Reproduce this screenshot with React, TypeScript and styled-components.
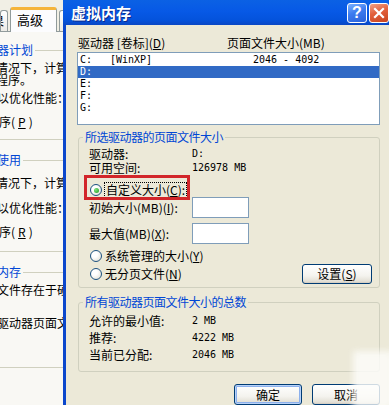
import React from "react";
import styled, { createGlobalStyle } from "styled-components";

const CJK = `"Noto Sans CJK SC", "Noto Sans", sans-serif`;
const MONO = `"DejaVu Sans Mono", "Noto Sans CJK SC", monospace`;

const Global = createGlobalStyle`
  html, body { margin: 0; padding: 0; background: #ECE9D8; }
  body { font-family: ${CJK}; font-size: 12px; color: #000; }
  * { box-sizing: border-box; }
`;

const Screen = styled.div`
  position: relative;
  width: 389px;
  height: 405px;
  overflow: hidden;
  display: flex;
  align-items: stretch;
  background: #ECE9D8;
  font-family: ${CJK};
  font-size: 12px;
  line-height: 14px;
  color: #000;
`;

/* ---------- background window (性能选项 / 高级) ---------- */
const BackWindow = styled.div`
  width: 63px;
  flex-shrink: 0;
  overflow: hidden;
  display: flex;
  flex-direction: column;
  background: #F1EFE5;
`;

const TabStrip = styled.div`
  height: 32px;
  flex-shrink: 0;
  width: 300px;
  display: flex;
  align-items: flex-end;
  border-bottom: 1px solid #919B9C;
`;

const Tab = styled.div<{ $active?: boolean; $w: number; $ml?: number }>`
  width: ${(p) => p.$w}px;
  margin-left: ${(p) => p.$ml ?? 0}px;
  height: ${(p) => (p.$active ? 25 : 21)}px;
  margin-bottom: ${(p) => (p.$active ? -1 : 0)}px;
  flex-shrink: 0;
  overflow: hidden;
  white-space: nowrap;
  line-height: ${(p) => (p.$active ? 20 : 19)}px;
  font-size: ${(p) => (p.$active ? 13 : 12)}px;
  padding-left: ${(p) => (p.$active ? 6 : 0)}px;
  background: ${(p) =>
    p.$active ? "#FCFCFE" : "linear-gradient(#FFFFFF, #ECEBE6)"};
  border: 1px solid #919B9C;
  border-bottom: none;
  border-top: ${(p) => (p.$active ? "3px solid #F5B43A" : "1px solid #919B9C")};
  border-radius: 3px 3px 0 0;
`;

const TabText = styled.span<{ $shift?: number }>`
  display: inline-block;
  margin-left: ${(p) => p.$shift ?? 0}px;
`;

const TabPane = styled.div`
  flex: 1;
  width: 300px;
  background: #F9F8F4;
  padding-top: 11px;
`;

const BackGroup = styled.div<{ $mt: number; $pb: number }>`
  margin-top: ${(p) => p.$mt}px;
  margin-left: -36px;
  width: 330px;
  padding-left: 8px;
  padding-bottom: ${(p) => p.$pb}px;
  border-bottom: 1px solid #D0D0BF;
  white-space: nowrap;
`;

const BackLegendRow = styled.div`
  height: 14px;
  display: flex;
  align-items: center;
  margin-left: 1px;
`;

const BackLegend = styled.span`
  color: #0046D5;
  line-height: 14px;
  padding-right: 2px;
`;

const Rule = styled.span`
  flex: 1;
  border-top: 1px solid #D0D0BF;
`;

const BackLine = styled.div<{ $mt: number; $x?: number }>`
  margin-top: ${(p) => p.$mt}px;
  margin-left: ${(p) => p.$x ?? 0}px;
  height: 12px;
  line-height: 12px;
  display: flex;
  align-items: center;
  gap: 3px;
`;

/* ---------- dialog ---------- */
const Dialog = styled.div`
  width: 331px;
  flex-shrink: 0;
  display: flex;
  flex-direction: column;
`;

const TitleBar = styled.div`
  height: 25px;
  flex-shrink: 0;
  display: flex;
  align-items: center;
  gap: 2px;
  padding: 0 5px 0 8px;
  background: linear-gradient(180deg, #0B61E4 0%, #0759E6 45%, #0453DC 80%, #0A47C4 100%);
`;

const Title = styled.div`
  flex: 1;
  color: #fff;
  font-weight: bold;
  font-size: 15px;
  line-height: 18px;
  margin-top: 1px;
  text-shadow: 1px 1px 0 #0B2A8C;
`;

const CaptionButton = styled.div<{ $kind: "help" | "close" }>`
  width: 20px;
  height: 20px;
  border: 1px solid #fff;
  border-radius: 3px;
  display: flex;
  align-items: center;
  justify-content: center;
  color: #fff;
  font-family: "Liberation Sans", sans-serif;
  font-weight: bold;
  font-size: 16px;
  background: ${(p) =>
    p.$kind === "help"
      ? "linear-gradient(160deg, #7BB2FF 0%, #3C7CF0 45%, #2A62DA 100%)"
      : "linear-gradient(160deg, #F2A286 0%, #E2603C 45%, #C8441E 100%)"};
`;

const Frame = styled.div`
  flex: 1;
  border-left: 3px solid #0B47CC;
  border-right: 3px solid #0B47CC;
  background: #ECE9D8;
  padding: 11px 11px 0 11px;
  display: flex;
  flex-direction: column;
`;

const Header = styled.div`
  height: 14px;
  line-height: 14px;
  display: flex;
  padding-left: 1px;
  white-space: nowrap;
`;

const HeaderCol = styled.span<{ $w?: number }>`
  width: ${(p) => (p.$w ? `${p.$w}px` : "auto")};
  flex-shrink: 0;
`;

const U = styled.span`
  text-decoration: underline;
`;

const List = styled.div`
  margin-top: 2px;
  height: 73px;
  border: 1px solid #7F9DB9;
  background: #fff;
  padding-top: 1px;
`;

const ListRow = styled.div<{ $selected?: boolean }>`
  height: 12px;
  line-height: 12px;
  display: grid;
  grid-template-columns: 30px 143px 1fr;
  padding-left: 2px;
  font-family: ${MONO};
  font-size: 10px;
  white-space: pre;
  background: ${(p) => (p.$selected ? "#316AC5" : "transparent")};
  color: ${(p) => (p.$selected ? "#fff" : "#000")};
`;

const Group = styled.fieldset<{ $mt: number; $pb: number }>`
  margin: ${(p) => p.$mt}px 0 0 1px;
  min-width: 0;
  border: 1px solid #D0D0BF;
  border-radius: 3px;
  padding: 0 7px ${(p) => p.$pb}px 10px;
`;

const Legend = styled.legend`
  margin-left: -6px;
  padding: 0 2px;
  line-height: 14px;
  letter-spacing: -0.5px;
  color: #0046D5;
  white-space: nowrap;
`;

const InfoGrid = styled.div<{ $row: number }>`
  margin-top: 3px;
  display: grid;
  grid-template-columns: 103px 1fr;
  grid-auto-rows: ${(p) => p.$row}px;
  align-items: center;
  line-height: 14px;
  white-space: nowrap;
`;

const Value = styled.span`
  font-family: ${MONO};
  font-size: 10px;
  line-height: 12px;
`;

const RadioRow = styled.div<{ $mt: number }>`
  position: relative;
  margin-top: ${(p) => p.$mt}px;
  height: 14px;
  padding-left: 1px;
  display: flex;
  align-items: center;
  gap: 3px;
  white-space: nowrap;
`;

const RadioCircle = styled.span<{ $checked?: boolean }>`
  width: 12px;
  height: 12px;
  flex-shrink: 0;
  border-radius: 50%;
  border: 1px solid #1C5180;
  background: radial-gradient(circle at 35% 35%, #FFFFFF 30%, #DCD9CC 100%);
  display: flex;
  align-items: center;
  justify-content: center;
  &::after {
    content: "";
    display: ${(p) => (p.$checked ? "block" : "none")};
    width: 5px;
    height: 5px;
    border-radius: 50%;
    background: radial-gradient(circle at 35% 35%, #7EE37E, #1F9A1F);
  }
`;

const FocusLabel = styled.span`
  outline: 1px dotted #000;
  outline-offset: 0;
  padding: 0 1px;
  line-height: 14px;
`;

const RedBox = styled.div`
  position: absolute;
  left: -5px;
  top: -8px;
  width: 106px;
  height: 25px;
  border: 3px solid #D2262A;
  pointer-events: none;
`;

const FieldRow = styled.div<{ $mt: number }>`
  margin-top: ${(p) => p.$mt}px;
  height: 21px;
  display: grid;
  grid-template-columns: 103px 57px;
  align-items: center;
  white-space: nowrap;
`;

const TextBox = styled.div`
  width: 57px;
  height: 21px;
  border: 1px solid #7F9DB9;
  background: #fff;
`;

const BottomRow = styled.div`
  margin-top: 1px;
  height: 20px;
  display: flex;
  align-items: center;
  justify-content: space-between;
`;

const XPButton = styled.div<{ $w: number; $h: number; $default?: boolean }>`
  width: ${(p) => p.$w}px;
  height: ${(p) => p.$h}px;
  flex-shrink: 0;
  border: 1px solid #003C74;
  border-radius: 3px;
  background: linear-gradient(180deg, #FFFFFF 0%, #F4F3EE 60%, #E3E0D6 90%, #D6D0C5 100%);
  box-shadow: ${(p) =>
    p.$default
      ? "inset 0 0 0 1px #B8D2F8, inset 0 0 0 2px #8CB0EC"
      : "inset 0 -1px 0 #D6D0C5"};
  display: flex;
  align-items: center;
  justify-content: center;
  line-height: 14px;
  white-space: nowrap;
`;

const ButtonRow = styled.div`
  margin-top: 12px;
  display: flex;
  justify-content: flex-end;
  gap: 10px;
`;

const Watermark = styled.div`
  position: absolute;
  right: -4px;
  bottom: -4px;
  width: 40px;
  height: 58px;
  background: rgba(252, 252, 250, 0.82);
  filter: blur(3px);
  pointer-events: none;
`;

function Radio({ checked, children }: { checked?: boolean; children: React.ReactNode }) {
  return (
    <>
      <RadioCircle $checked={checked} />
      {children}
    </>
  );
}

export default function App() {
  return (
    <>
      <Global />
      <Screen>
        <BackWindow>
          <TabStrip>
            <Tab $w={8}>
              <TabText $shift={-9}>果</TabText>
            </Tab>
            <Tab $active $w={47} $ml={2}>
              高级
            </Tab>
            <Tab $w={30} $ml={2} />
          </TabStrip>
          <TabPane>
            <BackGroup $mt={0} $pb={11}>
              <BackLegendRow>
                <BackLegend>处理器计划</BackLegend>
                <Rule />
              </BackLegendRow>
              <BackLine $mt={5}>默认情况下，计算机的设置是用较多的</BackLine>
              <BackLine $mt={0} $x={24}>程序。</BackLine>
              <BackLine $mt={6} $x={1}>调整以优化性能：</BackLine>
              <BackLine $mt={12}>
                <RadioCircle $checked />
                程序(<U>P</U>)
              </BackLine>
            </BackGroup>
            <BackGroup $mt={13} $pb={13}>
              <BackLegendRow>
                <BackLegend>内存使用</BackLegend>
                <Rule />
              </BackLegendRow>
              <BackLine $mt={10}>默认情况下，计算机的设置是用较多的</BackLine>
              <BackLine $mt={13} $x={1}>调整以优化性能：</BackLine>
              <BackLine $mt={12}>
                <RadioCircle $checked />
                程序(<U>R</U>)
              </BackLine>
            </BackGroup>
            <BackGroup $mt={13} $pb={38}>
              <BackLegendRow>
                <BackLegend>虚拟内存</BackLegend>
                <Rule />
              </BackLegendRow>
              <BackLine $mt={5} $x={1}>页面文件存在于硬盘上的一块区域</BackLine>
              <BackLine $mt={21} $x={1}>所有驱动器页面文件大小的总数：</BackLine>
            </BackGroup>
          </TabPane>
        </BackWindow>

        <Dialog>
          <TitleBar>
            <Title>虚拟内存</Title>
            <CaptionButton $kind="help">?</CaptionButton>
            <CaptionButton $kind="close">
              <svg width="12" height="12" viewBox="0 0 12 12">
                <path d="M2 2 L10 10 M10 2 L2 10" stroke="#fff" strokeWidth="2.2" strokeLinecap="square" />
              </svg>
            </CaptionButton>
          </TitleBar>
          <Frame>
            <Header>
              <HeaderCol $w={149}>
                驱动器 [卷标](<U>D</U>)
              </HeaderCol>
              <HeaderCol>页面文件大小(MB)</HeaderCol>
            </Header>
            <List>
              <ListRow>
                <span>C:</span>
                <span>[WinXP]</span>
                <span>2046 - 4092</span>
              </ListRow>
              <ListRow $selected>
                <span>D:</span>
                <span />
                <span />
              </ListRow>
              <ListRow>
                <span>E:</span>
                <span />
                <span />
              </ListRow>
              <ListRow>
                <span>F:</span>
                <span />
                <span />
              </ListRow>
              <ListRow>
                <span>G:</span>
                <span />
                <span />
              </ListRow>
            </List>

            <Group $mt={5} $pb={3}>
              <Legend>所选驱动器的页面文件大小</Legend>
              <InfoGrid $row={14}>
                <span>驱动器:</span>
                <Value>D:</Value>
                <span>可用空间:</span>
                <Value>126978 MB</Value>
              </InfoGrid>
              <RadioRow $mt={8}>
                <Radio checked>
                  <FocusLabel>
                    自定义大小(<U>C</U>):
                  </FocusLabel>
                </Radio>
                <RedBox />
              </RadioRow>
              <FieldRow $mt={0}>
                <span>
                  初始大小(MB)(<U>I</U>):
                </span>
                <TextBox />
              </FieldRow>
              <FieldRow $mt={5}>
                <span>
                  最大值(MB)(<U>X</U>):
                </span>
                <TextBox />
              </FieldRow>
              <RadioRow $mt={5}>
                <Radio>
                  <span>
                    系统管理的大小(<U>Y</U>)
                  </span>
                </Radio>
              </RadioRow>
              <BottomRow>
                <RadioRow $mt={0}>
                  <Radio>
                    <span>
                      无分页文件(<U>N</U>)
                    </span>
                  </Radio>
                </RadioRow>
                <XPButton $w={70} $h={20}>
                  设置(<U>S</U>)
                </XPButton>
              </BottomRow>
            </Group>

            <Group $mt={7} $pb={8}>
              <Legend>所有驱动器页面文件大小的总数</Legend>
              <InfoGrid $row={17}>
                <span>允许的最小值:</span>
                <Value>2 MB</Value>
                <span>推荐:</span>
                <Value>4222 MB</Value>
                <span>当前已分配:</span>
                <Value>2046 MB</Value>
              </InfoGrid>
            </Group>

            <ButtonRow>
              <XPButton $w={68} $h={21} $default>
                确定
              </XPButton>
              <XPButton $w={68} $h={21}>
                取消
              </XPButton>
            </ButtonRow>
          </Frame>
        </Dialog>
        <Watermark />
      </Screen>
    </>
  );
}
